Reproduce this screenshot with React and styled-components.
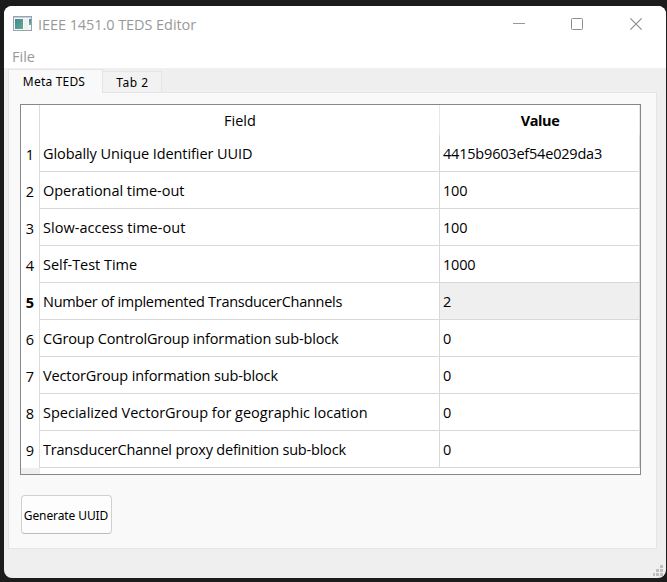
import React from "react";
import styled, { createGlobalStyle } from "styled-components";

const GlobalStyle = createGlobalStyle`
  * { box-sizing: border-box; }
  body {
    margin: 0;
    background: #1c1c1c;
    font-family: "Open Sans", "Noto Sans", sans-serif;
    color: #000;
    overflow: hidden;
  }
`;

const Desktop = styled.div`
  width: 667px;
  height: 582px;
  padding: 6px 1px 4px 4px;
  background: #1c1c1c;
`;

const Window = styled.main`
  display: flex;
  flex-direction: column;
  height: 572px;
  background: #efefef;
  border-radius: 8px;
  overflow: hidden;
`;

const TitleBar = styled.header`
  display: flex;
  align-items: center;
  height: 37px;
  flex: none;
  padding: 0 1px 1px 9px;
  background: #fff;
`;

const Title = styled.h1`
  flex: 1;
  margin: 0 0 0 6px;
  padding-top: 2px;
  font-size: 14.5px;
  font-weight: 400;
  line-height: 20px;
  letter-spacing: -0.07px;
  color: #999;
`;

const WindowButton = styled.button`
  display: flex;
  align-items: center;
  justify-content: center;
  width: 58.5px;
  height: 36px;
  padding: 0;
  border: 0;
  background: none;
`;

const MenuBar = styled.nav`
  flex: none;
  height: 25px;
  padding: 4px 8px 0;
  background: #fff;
  font-size: 14.5px;
  line-height: 20px;
  color: #999;
`;

const TabBar = styled.div`
  display: flex;
  align-items: flex-end;
  flex: none;
  height: 24px;
  padding-left: 4px;
`;

const Tab = styled.button`
  width: ${(p) => p.$width}px;
  height: ${(p) => (p.$active ? 24 : 21)}px;
  margin-bottom: ${(p) => (p.$active ? -1 : 0)}px;
  padding: ${(p) => (p.$active ? "0 3px 0 0" : "1px 0 0 1px")};
  border: 1px solid #e5e5e5;
  border-left-width: ${(p) => (p.$active ? 1 : 0)}px;
  border-bottom: 0;
  background: ${(p) => (p.$active ? "#f9f9f9" : "#f2f2f2")};
  font-family: "Noto Sans", sans-serif;
  font-size: 12px;
  line-height: 20px;
  letter-spacing: ${(p) => p.$spacing}px;
  color: #000;
  position: relative;
  z-index: ${(p) => (p.$active ? 1 : 0)};
`;

const Pane = styled.section`
  flex: none;
  width: 649px;
  height: 457px;
  margin-left: 4px;
  padding: 11px 11px 0;
  border: 1px solid #e5e5e5;
  background: #f9f9f9;
`;

const Table = styled.div`
  display: grid;
  grid-template-columns: 19px 400px 200px;
  grid-template-rows: 30px repeat(9, 37px) 6px;
  width: 621px;
  height: 371px;
  border: 1px solid #828790;
  background: #fff;
  font-size: 14.5px;
  line-height: 20px;
`;

const ColumnHeader = styled.div`
  padding: 6px 0 0 1px;
  border-right: 1px solid #e8e8e8;
  text-align: center;
  font-weight: ${(p) => (p.$bold ? 700 : 400)};
  letter-spacing: ${(p) => (p.$bold ? -0.4 : 0)}px;
`;

const RowNumber = styled.div`
  padding-top: 10px;
  border-right: 1px solid #dcdcdc;
  text-align: center;
  font-weight: ${(p) => (p.$bold ? 700 : 400)};
`;

const Cell = styled.div`
  padding: 9px 3px 0;
  border-right: 1px solid #d8d8d8;
  border-bottom: 1px solid #d8d8d8;
  background: ${(p) => (p.$selected ? "#efefef" : "#fff")};
  letter-spacing: ${(p) => p.$spacing || 0}px;
  white-space: nowrap;
`;

const HeaderRemainder = styled.div`
  background: #efefef;
`;

const PushButton = styled.button`
  display: block;
  width: 91px;
  height: 39px;
  margin: 20px 0 0 1px;
  padding: 2px 1px 0 0;
  border: 1px solid #d0d0d0;
  border-bottom-color: #bcbcbc;
  border-radius: 4px;
  background: #fdfdfd;
  font-family: "Noto Sans", sans-serif;
  font-size: 12px;
  letter-spacing: -0.1px;
  white-space: nowrap;
  color: #000;
`;

const StatusBar = styled.footer`
  display: flex;
  flex: 1;
  align-items: flex-end;
  justify-content: flex-end;
  padding: 0 2px 2px 0;
`;

const rows = [
  { field: "Globally Unique Identifier UUID", value: "4415b9603ef54e029da3", spacing: -0.08, valueSpacing: -0.2 },
  { field: "Operational time-out", value: "100", spacing: -0.03, valueSpacing: -0.2 },
  { field: "Slow-access time-out", value: "100", spacing: 0.03, valueSpacing: -0.2 },
  { field: "Self-Test Time", value: "1000", spacing: -0.03, valueSpacing: -0.2 },
  { field: "Number of implemented TransducerChannels", value: "2", spacing: -0.29 },
  { field: "CGroup ControlGroup information sub-block", value: "0", spacing: -0.15 },
  { field: "VectorGroup information sub-block", value: "0", spacing: -0.13 },
  { field: "Specialized VectorGroup for geographic location", value: "0", spacing: 0 },
  { field: "TransducerChannel proxy definition sub-block", value: "0", spacing: -0.2 },
];

const AppIcon = () => (
  <svg width="19" height="16" viewBox="0 0 19 16" shapeRendering="crispEdges">
    <defs>
      <linearGradient id="screen" x1="0" y1="0" x2="1" y2="1">
        <stop offset="0" stopColor="#4a7fa4" />
        <stop offset="1" stopColor="#57b47c" />
      </linearGradient>
      <linearGradient id="strip" x1="0" y1="0" x2="0" y2="1">
        <stop offset="0" stopColor="#4a84b0" />
        <stop offset="1" stopColor="#62c080" />
      </linearGradient>
    </defs>
    <path d="M.5.5h18v14H.5z" fill="#f5f6f7" stroke="#9aa2ad" />
    <path d="M1 1h17v1H1z" fill="#c6ccd3" />
    <path d="M2 3h9v10H2z" fill="#fff" />
    <path d="M2 3h8v10H2z" fill="url(#screen)" />
    <path d="M11 3h4v10h-4z" fill="#eff0f1" />
    <path d="M16 3h2v6h-2z" fill="url(#strip)" />
  </svg>
);

const MinimizeIcon = () => (
  <svg width="12" height="12" viewBox="0 0 12 12">
    <path d="M0 5.5h12" stroke="#999" />
  </svg>
);

const MaximizeIcon = () => (
  <svg width="12" height="12" viewBox="0 0 12 12">
    <rect x=".5" y=".5" width="11" height="11" rx="1" fill="none" stroke="#8c8c8c" />
  </svg>
);

const CloseIcon = () => (
  <svg width="12" height="12" viewBox="0 0 12 12">
    <path d="M.3.3l11.4 11.4M11.7.3L.3 11.7" stroke="#8c8c8c" strokeWidth="1.1" />
  </svg>
);

const SizeGrip = () => (
  <svg width="11" height="11" viewBox="0 0 11 11" fill="#bfbfbf">
    <path d="M7 0h3v3H7zM3 4h3v3H3zM7 4h3v3H7zM0 8h2v3H0zM3 8h3v3H3zM7 8h3v3H7z" />
  </svg>
);

export default function App() {
  const selectedRow = 4;
  return (
    <>
      <GlobalStyle />
      <Desktop>
        <Window>
          <TitleBar>
            <AppIcon />
            <Title>IEEE 1451.0 TEDS Editor</Title>
            <WindowButton aria-label="Minimize"><MinimizeIcon /></WindowButton>
            <WindowButton aria-label="Maximize"><MaximizeIcon /></WindowButton>
            <WindowButton aria-label="Close"><CloseIcon /></WindowButton>
          </TitleBar>
          <MenuBar>File</MenuBar>
          <TabBar>
            <Tab $active $width={95} $spacing={0.2}>Meta TEDS</Tab>
            <Tab $width={59} $spacing={0.5}>Tab 2</Tab>
          </TabBar>
          <Pane>
            <Table>
              <RowNumber />
              <ColumnHeader>Field</ColumnHeader>
              <ColumnHeader $bold>Value</ColumnHeader>
              {rows.map(({ field, value, spacing, valueSpacing }, i) => (
                <React.Fragment key={field}>
                  <RowNumber $bold={i === selectedRow}>{i + 1}</RowNumber>
                  <Cell $spacing={spacing}>{field}</Cell>
                  <Cell $selected={i === selectedRow} $spacing={valueSpacing}>{value}</Cell>
                </React.Fragment>
              ))}
              <HeaderRemainder />
            </Table>
            <PushButton>Generate UUID</PushButton>
          </Pane>
          <StatusBar><SizeGrip /></StatusBar>
        </Window>
      </Desktop>
    </>
  );
}
